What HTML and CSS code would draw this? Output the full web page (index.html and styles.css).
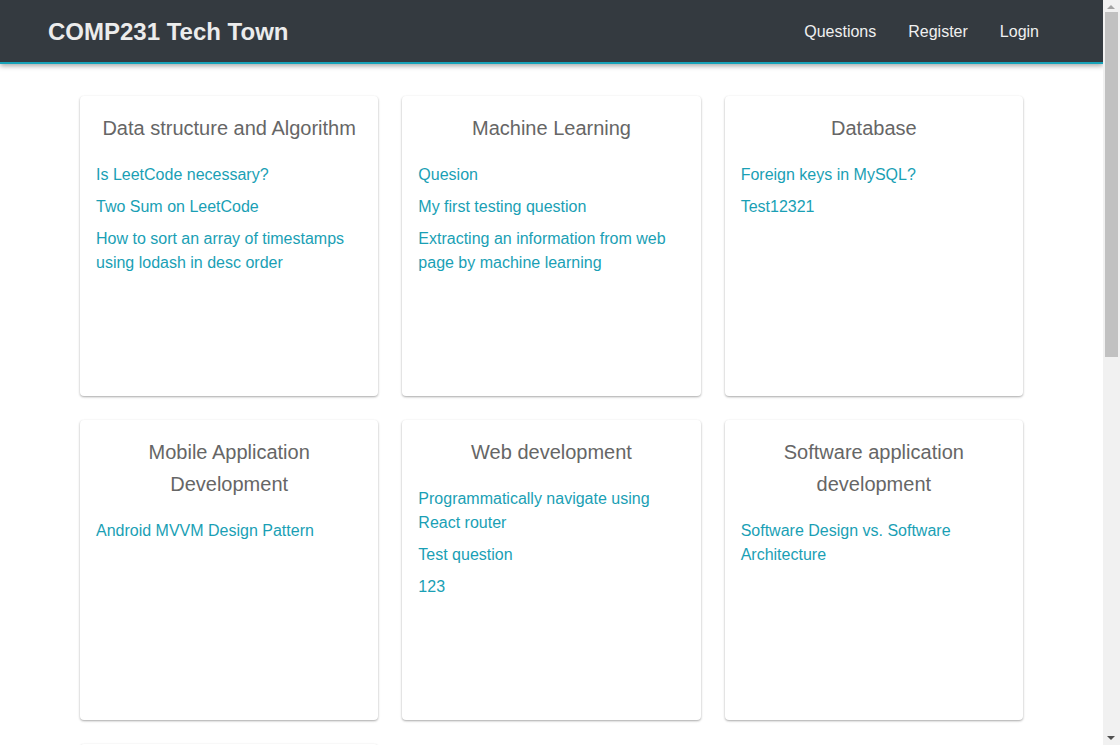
FILE: index.html
```html
<!DOCTYPE html>
<html lang="en">
<head>
<meta charset="utf-8">
<title>COMP231 Tech Town</title>
<link rel="stylesheet" href="styles.css">
</head>
<body>
<div class="page">
  <header class="topbar">
    <a class="brand" href="#">COMP231 Tech Town</a>
    <nav class="nav">
      <a href="#">Questions</a>
      <a href="#">Register</a>
      <a href="#">Login</a>
    </nav>
  </header>
  <main class="grid">
    <section class="card">
      <h2 class="card-title">Data structure and Algorithm</h2>
      <a class="q" href="#">Is LeetCode necessary?</a>
      <a class="q" href="#">Two Sum on LeetCode</a>
      <a class="q" href="#">How to sort an array of timestamps using lodash in desc order</a>
    </section>
    <section class="card">
      <h2 class="card-title">Machine Learning</h2>
      <a class="q" href="#">Quesion</a>
      <a class="q" href="#">My first testing question</a>
      <a class="q" href="#">Extracting an information from web page by machine learning</a>
    </section>
    <section class="card">
      <h2 class="card-title">Database</h2>
      <a class="q" href="#">Foreign keys in MySQL?</a>
      <a class="q" href="#">Test12321</a>
    </section>
    <section class="card">
      <h2 class="card-title">Mobile Application Development</h2>
      <a class="q" href="#">Android MVVM Design Pattern</a>
    </section>
    <section class="card">
      <h2 class="card-title">Web development</h2>
      <a class="q" href="#">Programmatically navigate using React router</a>
      <a class="q" href="#">Test question</a>
      <a class="q" href="#">123</a>
    </section>
    <section class="card">
      <h2 class="card-title">Software application development</h2>
      <a class="q" href="#">Software Design vs. Software Architecture</a>
    </section>
    <section class="card card-last"></section>
  </main>
</div>
<div class="fake-scrollbar" aria-hidden="true">
  <span class="sb-arrow sb-up"></span>
  <span class="sb-thumb"></span>
  <span class="sb-arrow sb-down"></span>
</div>
</body>
</html>
```
FILE: styles.css
```css
html { overflow: hidden; height: 100%; }
body {
  margin: 0;
  height: 100%;
  background: #fff;
  font-family: "Liberation Sans", Arial, sans-serif;
}
.page {
  margin-right: 17px;
}
.topbar {
  height: 62px;
  background: #343a40;
  border-bottom: 2px solid #17a2b8;
  box-shadow: 0 2px 5px rgba(0,0,0,0.35);
  display: flex;
  align-items: center;
  justify-content: space-between;
  padding: 0 64px 0 48px;
  position: relative;
}
.brand {
  color: #ececec;
  font-size: 24px;
  font-weight: bold;
  text-decoration: none;
  line-height: 32px;
  margin-top: 2px;
}
.nav {
  display: flex;
  gap: 32px;
  margin-top: 1px;
}
.nav a {
  color: #f0f0f0;
  font-size: 16px;
  text-decoration: none;
  line-height: 24px;
}
.grid {
  width: 943px;
  margin: 0 auto;
  padding: 32px 0 24px;
  display: grid;
  grid-template-columns: repeat(3, 1fr);
  gap: 24px;
}
.card {
  height: 300px;
  box-sizing: border-box;
  padding: 16px;
  background: #fff;
  border-radius: 4px;
  box-shadow: 0 1px 3px rgba(0,0,0,0.12), 0 1px 2px rgba(0,0,0,0.24);
  display: flex;
  flex-direction: column;
  align-items: flex-start;
}
.card-title {
  align-self: stretch;
  margin: 0 0 19px;
  font-size: 20px;
  font-weight: normal;
  line-height: 32px;
  color: #666;
  text-align: center;
}
.q {
  display: block;
  color: #1a9fb5;
  font-size: 16px;
  line-height: 24px;
  margin-bottom: 8px;
  text-decoration: none;
}
.fake-scrollbar {
  position: fixed;
  top: 0;
  right: 0;
  width: 17px;
  height: 100%;
  background: #f1f1f1;
}
.sb-thumb {
  position: absolute;
  left: 2px;
  right: 2px;
  top: 12px;
  height: 345px;
  background: #c1c1c1;
}
.sb-arrow {
  position: absolute;
  left: 4px;
  width: 0;
  height: 0;
  border-left: 4px solid transparent;
  border-right: 4px solid transparent;
}
.sb-up {
  top: 5px;
  border-bottom: 4px solid #a3a3a3;
}
.sb-down {
  bottom: 5px;
  border-top: 4px solid #505050;
}
```
